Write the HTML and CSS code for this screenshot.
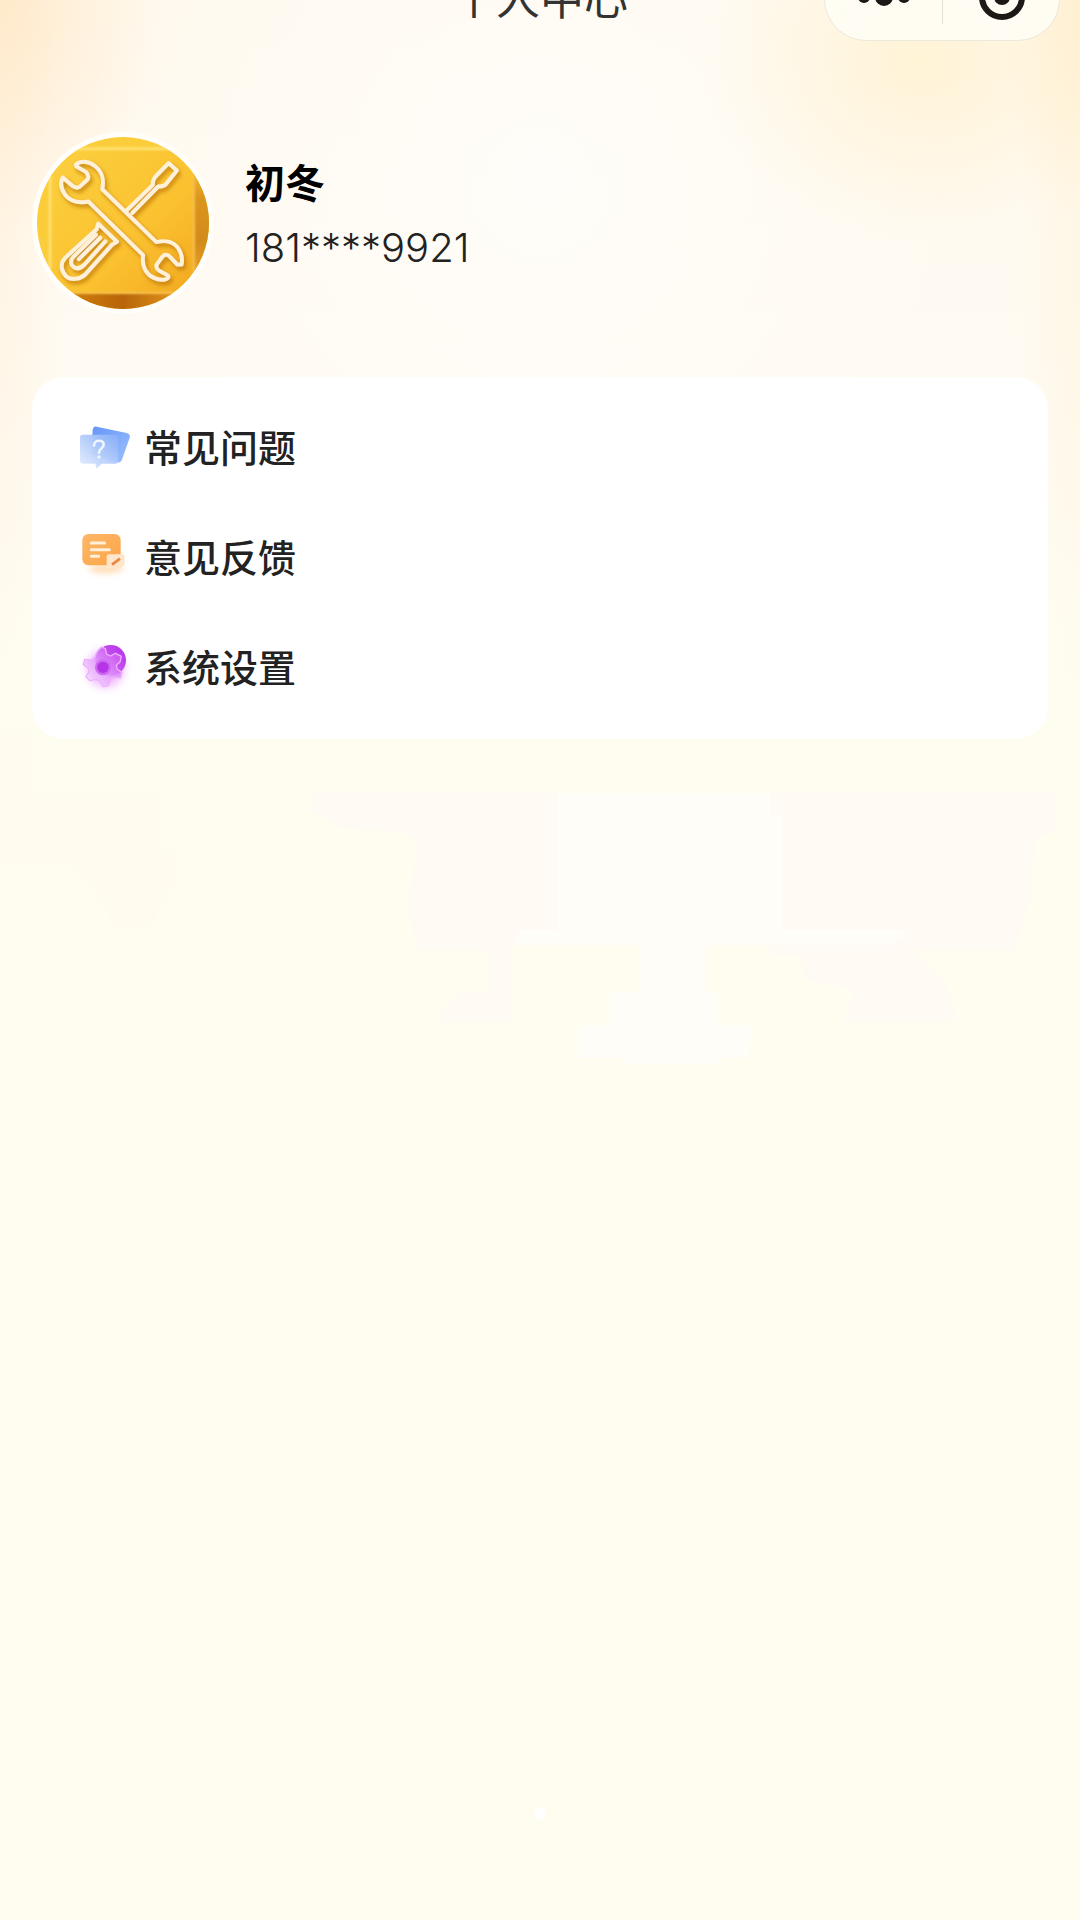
FILE: index.html
```html
<!DOCTYPE html>
<html lang="zh-CN">
<head>
  <meta charset="UTF-8" />
  <meta name="viewport" content="width=device-width, initial-scale=1.0" />
  <title>个人中心</title>
  <link rel="stylesheet" href="styles.css">
</head>
<body>
  <svg class="backdrop" viewBox="0 0 1080 500" aria-hidden="true">
    <path fill="#fffbee" d="M0 130H32V194H165V200H160V255L180 240L175 280L150 327H115L88 280L70 265H0Z"/>
    <path fill="#fffaf3" d="M312 193H558V345H510V422H435L455 393H488V350H415L408 300L418 240L400 232L340 228L310 210Z"/>
    <path fill="#fffaf3" d="M770 193H1055V230L1035 240L1033 290L1015 350H915L945 380L958 422H842L855 390L805 380L800 355H770Z"/>
    <path fill="#fffdf7" d="M558 193H770V215H782V330H910L890 345H705V392H718V425H752L748 458H720V464H625V458H578V425H610V392H640V345H515L520 330H558Z"/>
  </svg>

  <div class="page">
    <header class="navbar">
      <h1 class="navbar-title">个人中心</h1>
      <div class="capsule">
        <button class="capsule-btn" aria-label="更多">
          <svg width="60" height="40" viewBox="0 0 60 40">
            <circle cx="10" cy="18" r="6"/>
            <circle cx="30" cy="18" r="9"/>
            <circle cx="50" cy="18" r="6"/>
          </svg>
        </button>
        <button class="capsule-btn" aria-label="关闭">
          <svg width="50" height="50" viewBox="0 0 50 50">
            <circle cx="26" cy="23" r="20" fill="none" stroke="#1b1815" stroke-width="6"/>
            <circle cx="26" cy="23" r="8"/>
          </svg>
        </button>
      </div>
    </header>

    <section class="profile">
      <svg class="avatar" viewBox="53 51 514 514" role="img" aria-label="头像">
        <defs>
          <linearGradient id="plate" x1="0" y1="0" x2="1" y2="1">
            <stop offset="0" stop-color="#fbd03f"/>
            <stop offset="0.6" stop-color="#fbc230"/>
            <stop offset="1" stop-color="#f2a91f"/>
          </linearGradient>
          <linearGradient id="side" x1="0" y1="0" x2="0" y2="1">
            <stop offset="0.1" stop-color="#f8cd42"/>
            <stop offset="0.35" stop-color="#dc961d"/>
            <stop offset="0.6" stop-color="#d28a1a"/>
            <stop offset="0.85" stop-color="#efaa28"/>
          </linearGradient>
          <linearGradient id="under" x1="0" y1="0" x2="1" y2="0">
            <stop offset="0.2" stop-color="#cd7e0b"/>
            <stop offset="0.5" stop-color="#b8650a"/>
            <stop offset="0.85" stop-color="#e79b1f"/>
          </linearGradient>
          <filter id="drop" x="-20%" y="-20%" width="150%" height="150%">
            <feDropShadow dx="6" dy="9" stdDeviation="6" flood-color="#b56b00" flood-opacity="0.75"/>
          </filter>
          <filter id="soft"><feGaussianBlur stdDeviation="3"/></filter>
        </defs>
        <rect x="50" y="50" width="520" height="520" fill="#fbcd3b"/>
        <rect x="522" y="50" width="48" height="520" fill="url(#side)"/>
        <rect x="50" y="518" width="520" height="52" fill="url(#under)"/>
        <rect x="92" y="86" width="430" height="430" fill="url(#plate)"/>
        <g fill="none" stroke-width="7" filter="url(#soft)">
          <path d="M92 516V86H522" stroke="#ffe57a"/>
          <path d="M522 86V517H92" stroke="#f5bd48"/>
        </g>
        <g fill="none" stroke="#fff0d9" stroke-width="12" stroke-linejoin="round" stroke-linecap="round" filter="url(#drop)">
          <path d="M169 134C181 121 207 122 228 139C249 157 254 177 248 207L410 365C438 358 463 365 476 385C486 401 488 418 485 432H472L452 411C445 401 434 401 428 408L414 427C407 436 409 444 417 450L443 464C449 470 444 475 435 477C410 480 388 468 377 449C369 435 368 420 370 404L207 244C178 250 151 243 136 222C124 205 122 187 130 172L159 197C166 202 172 205 180 200L204 178C210 171 205 163 200 156L171 139Z"/>
          <path d="M319 272L399 194C398 181 401 176 407 169L446 129L471 151L439 191C433 198 426 199 415 199L338 278"/>
          <path d="M236 310L231 327L137 412C120 430 126 453 140 467C155 480 180 476 196 463L278 372L292 364Z"/>
          <path d="M229 343L161 410C151 421 154 434 163 440C174 448 186 441 195 432L257 363"/>
          <path d="M242 352L178 416"/>
        </g>
      </svg>
      <div class="profile-info">
        <h2 class="profile-name">初冬</h2>
        <p class="profile-phone">181****9921</p>
      </div>
    </section>

    <nav class="menu">
      <a class="menu-item" href="#faq">
        <svg class="menu-icon" viewBox="0 0 156 156" aria-hidden="true">
          <defs>
            <linearGradient id="blue" x1="0" y1="0" x2="1" y2="1">
              <stop offset="0" stop-color="#6595f8"/>
              <stop offset="1" stop-color="#9dc0fd"/>
            </linearGradient>
            <linearGradient id="bubble" x1="1" y1="0" x2="0" y2="1">
              <stop offset="0" stop-color="#86aef9"/>
              <stop offset="0.5" stop-color="#b5cdfa"/>
              <stop offset="1" stop-color="#e6effd"/>
            </linearGradient>
          </defs>
          <path fill="url(#blue)" d="M50 14Q40 12 38 24L34 97L112 121Q122 123 126 113L149 47Q152 36 140 33Z"/>
          <path fill="url(#bubble)" opacity="0.95" d="M8 38H104Q114 38 114 48V116Q114 125 105 125H65L50 140L46 125H9Q0 125 0 116V46Q0 38 8 38Z"/>
          <path fill="none" stroke="#edf5ff" stroke-width="8" stroke-linecap="round" d="M42 71C41 53 70 51 71 67C72 80 57 79 57 92"/>
          <circle cx="57" cy="105" r="5" fill="#edf5ff"/>
        </svg>
        <span>常见问题</span>
      </a>
      <a class="menu-item" href="#feedback">
        <svg class="menu-icon" viewBox="0 0 156 156" aria-hidden="true">
          <defs>
            <linearGradient id="orange" x1="0" y1="0" x2="1" y2="1">
              <stop offset="0" stop-color="#fdb768"/>
              <stop offset="0.5" stop-color="#fcae57"/>
              <stop offset="1" stop-color="#fca347"/>
            </linearGradient>
            <filter id="glow" x="-30%" y="-100%" width="160%" height="300%"><feGaussianBlur stdDeviation="9"/></filter>
          </defs>
          <ellipse cx="78" cy="110" rx="52" ry="12" fill="#ffc98b" opacity="0.7" filter="url(#glow)"/>
          <rect x="7" y="6" width="115" height="94" rx="18" fill="url(#orange)"/>
          <path fill="none" stroke="#fff0d9" stroke-width="9" stroke-linecap="round" d="M34 33H74M34 53H88M34 73H56"/>
          <path fill="#ffe5c9" d="M86 67H128Q134 67 134 73V98L121 108H86Q80 108 80 102V73Q80 67 86 67Z"/>
          <path fill="none" stroke="#ed8645" stroke-width="8" d="M96 98L120 80"/>
        </svg>
        <span>意见反馈</span>
      </a>
      <a class="menu-item" href="#settings">
        <svg class="menu-icon" viewBox="0 0 156 156" aria-hidden="true">
          <defs>
            <linearGradient id="purple" x1="1" y1="0" x2="0" y2="1">
              <stop offset="0" stop-color="#b52be9"/>
              <stop offset="1" stop-color="#d47af8"/>
            </linearGradient>
            <linearGradient id="gear" x1="1" y1="0" x2="0" y2="1">
              <stop offset="0.2" stop-color="#d264f2"/>
              <stop offset="0.5" stop-color="#e39bfb"/>
              <stop offset="0.9" stop-color="#f6dcff"/>
            </linearGradient>
            <filter id="haze" x="-50%" y="-50%" width="200%" height="200%"><feGaussianBlur stdDeviation="12"/></filter>
          </defs>
          <circle cx="76" cy="80" r="56" fill="#ea9cfb" opacity="0.7" filter="url(#haze)"/>
          <circle cx="92" cy="55" r="46" fill="url(#purple)"/>
          <path fill="url(#gear)" fill-opacity="0.75" stroke="#eeb0fd" stroke-width="4" stroke-linejoin="round" d="M52 28L64 15L76 20L80 37L92 42L106 34L124 43L120 60L109 70L112 82L126 91L122 108L102 106L92 112L86 130L69 134L60 118L48 112L30 116L18 104L27 90L24 78L10 68L14 52L34 54L44 46Z"/>
          <circle cx="69" cy="76" r="24" fill="#cd68ef"/>
          <circle cx="69" cy="76" r="17" fill="#b734e6"/>
        </svg>
        <span>系统设置</span>
      </a>
    </nav>

    <footer class="footer"><span class="footer-dot"></span></footer>
  </div>
</body>
</html>
```
FILE: styles.css
```css
* {
  box-sizing: border-box;
}
body {
  position: relative;
  margin: 0;
  color: #222;
  font-family: Inter, "Noto Sans CJK SC", sans-serif;
  background-color: #fffdf0;
  background-image:
    radial-gradient(ellipse 160px 240px at 0 0, rgba(255, 230, 195, 0.8), rgba(255, 240, 215, 0)),
    radial-gradient(ellipse 220px 180px at 920px 60px, rgba(255, 242, 208, 0.8), rgba(255, 242, 208, 0)),
    radial-gradient(ellipse 80px 200px at 100% 20px, rgba(255, 235, 200, 0.7), rgba(255, 235, 200, 0)),
    radial-gradient(ellipse 60px 460px at 0 220px, rgba(255, 243, 224, 0.8), rgba(255, 243, 224, 0)),
    radial-gradient(ellipse 60px 440px at 100% 260px, rgba(255, 246, 226, 0.8), rgba(255, 246, 226, 0)),
    radial-gradient(ellipse 420px 440px at 540px 180px, #fffdf9, rgba(255, 253, 249, 0)),
    linear-gradient(#fff9ee, #fffaf2 360px, #fffdf0 740px);
}
.backdrop {
  position: absolute;
  top: 600px;
  left: 0;
  width: 100%;
  overflow: visible;
}
.page {
  position: relative;
  display: flex;
  flex-direction: column;
  min-height: 100vh;
  overflow: hidden;
}

/* nav bar is scrolled halfway out of view */
.navbar {
  display: grid;
  grid-template-columns: 1fr auto 1fr;
  align-items: center;
  margin-top: -43px;
  padding: 0 20px;
}
.navbar-title {
  grid-column: 2;
  margin: 0;
  color: #333;
  font-size: 44px;
  font-weight: 400;
  line-height: 84px;
}
.capsule {
  justify-self: end;
  display: flex;
  width: 236px;
  height: 84px;
  border: 1px solid #ece8dd;
  border-radius: 42px;
  background-color: rgba(255, 255, 247, 0.8);
}
.capsule-btn {
  position: relative;
  flex: 1;
  display: flex;
  align-items: center;
  justify-content: center;
  padding: 0;
  border: none;
  background: none;
  fill: #1b1815;
}
.capsule-btn + .capsule-btn::before {
  content: "";
  position: absolute;
  left: 0;
  top: 16px;
  bottom: 16px;
  width: 1px;
  background-color: #e3e0d8;
}

.profile {
  display: flex;
  align-items: center;
  gap: 31px;
  padding: 91px 32px 0;
}
.avatar {
  width: 182px;
  height: 182px;
  border: 5px solid #fffefa;
  border-radius: 50%;
}
.profile-info {
  padding-bottom: 14px;
}
.profile-name {
  margin: 0;
  color: #000;
  font-size: 40px;
  font-weight: 700;
  line-height: 64px;
}
.profile-phone {
  margin: 0;
  font-size: 40px;
  font-weight: 300;
  line-height: 64px;
}

.menu {
  margin: 63px 32px 0;
  padding: 16px 48px;
  border-radius: 32px;
  background-color: #fff;
}
.menu-item {
  display: flex;
  align-items: center;
  gap: 12px;
  height: 110px;
  color: #222;
  font-size: 38px;
  font-weight: 500;
  line-height: 56px;
  text-decoration: none;
}
.menu-icon {
  width: 52px;
  height: 52px;
  overflow: visible;
}

.footer {
  display: flex;
  justify-content: center;
  margin-top: auto;
  padding-bottom: 100px;
}
.footer-dot {
  width: 12px;
  height: 12px;
  border-radius: 50%;
  background-color: #fff;
}
```
